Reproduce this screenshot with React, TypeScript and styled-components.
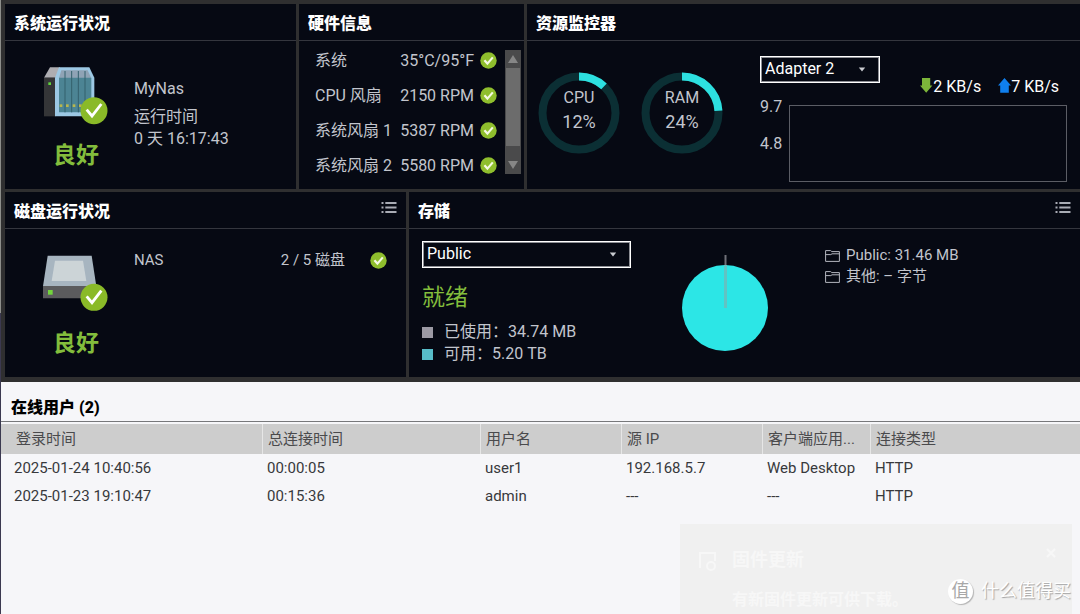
import React, { useState } from "react";
import styled, { createGlobalStyle } from "styled-components";

const GlobalStyle = createGlobalStyle`
  *, *::before, *::after { box-sizing: border-box; }
  body {
    margin: 0;
    background: #2f2f30;
    font-family: Roboto, "Noto Sans CJK SC", sans-serif;
    font-size: 16px;
    line-height: 22px;
    color: #c2c5cd;
  }
  button, select { font: inherit; }
  ul { margin: 0; padding: 0; list-style: none; }
`;

const Page = styled.div`
  position: relative;
  display: flex;
  flex-direction: column;
  min-height: 100vh;
  padding-left: 1px;
  overflow: hidden;
  background: linear-gradient(#8d8e8a 51%, #3b3950 51%);
`;

const Dashboard = styled.div`
  display: flex;
  flex-direction: column;
  gap: 3px;
  padding: 4px 0 5px 4px;
  background: #2f2f30;
`;

const PanelRow = styled.div<{ $columns: string }>`
  display: grid;
  grid-template-columns: ${(p) => p.$columns};
  gap: 3px;
`;

const PanelBox = styled.section`
  min-width: 0;
  min-height: 185px;
  background: #060913;
`;

const PanelHeader = styled.header`
  display: flex;
  align-items: flex-start;
  justify-content: space-between;
  height: 37px;
  padding: 9px 9px 0 9px;
  border-bottom: 1px solid #34363e;
`;

const PanelTitle = styled.h2`
  margin: 0;
  font-size: 16px;
  line-height: 22px;
  font-weight: 900;
  color: #ffffff;
`;

const IconButton = styled.button`
  display: flex;
  padding: 0;
  border: 0;
  background: none;
  color: #a9acb5;
  cursor: pointer;
`;

const StatusBody = styled.div`
  display: flex;
  gap: 24px;
  padding: 24px 19px 0 37px;
`;

const StatusColumn = styled.div`
  display: flex;
  flex: none;
  flex-direction: column;
  align-items: center;
  gap: 13px;
  width: 68px;
`;

const StatusText = styled.strong<{ $weight: number }>`
  font-size: 23px;
  line-height: 32px;
  font-weight: ${(p) => p.$weight};
  color: #83bd3c;
`;

const SystemInfo = styled.div`
  display: flex;
  flex-direction: column;
  padding-top: 13px;
`;

const HostName = styled.span`
  margin-bottom: 6px;
`;

const DiskInfo = styled.div`
  display: flex;
  flex: 1;
  align-items: center;
  height: 22px;
  margin-top: -4px;
  font-size: 15px;
`;

const DiskCount = styled.span`
  margin-left: auto;
  padding-right: 25px;
`;

const HardwareBody = styled.div`
  display: flex;
  gap: 8px;
  padding: 2px 3px 0 16px;
`;

const HardwareList = styled.ul`
  flex: 1;
`;

const HardwareRow = styled.li`
  display: grid;
  grid-template-columns: 1fr auto 17px;
  align-items: center;
  column-gap: 6px;
  height: 35px;
  white-space: nowrap;
`;

const ScrollTrack = styled.div`
  display: flex;
  flex-direction: column;
  width: 16px;
  height: 124px;
  margin-top: 7px;
  background: #4a4a4b;
`;

const ScrollButton = styled.button`
  display: flex;
  align-items: center;
  justify-content: center;
  height: 18px;
  padding: 0;
  border: 0;
  background: #4a4a4b;
`;

const ScrollThumb = styled.div`
  height: 78px;
  margin: 0 1px;
  background: #6c6c6c;
`;

const ScrollSpace = styled.div`
  flex: 1;
`;

const MonitorBody = styled.div`
  display: flex;
  padding: 15px 13px 0 11px;
`;

const Gauges = styled.div`
  display: flex;
  flex: none;
  gap: 21px;
  width: 222px;
  padding-top: 16px;
`;

const GaugeBox = styled.div`
  display: grid;
  width: 82px;
  height: 82px;
  > * { grid-area: 1 / 1; }
`;

const GaugeText = styled.div`
  display: flex;
  flex-direction: column;
  justify-content: center;
  align-items: center;
  padding-bottom: 6px;
  line-height: 24px;
`;

const GaugeValue = styled.span`
  font-size: 18px;
`;

const Network = styled.div`
  display: flex;
  flex: 1;
  flex-direction: column;
`;

const NetworkTop = styled.div`
  display: flex;
  align-items: flex-start;
  justify-content: space-between;
  height: 41px;
`;

const Rates = styled.div`
  display: flex;
  align-self: flex-end;
  gap: 17px;
  padding-right: 8px;
  line-height: 20px;
  color: #ffffff;
`;

const Rate = styled.span`
  display: flex;
  align-items: center;
`;

const ChartRow = styled.div`
  display: flex;
`;

const AxisLabels = styled.div`
  display: flex;
  flex: none;
  flex-direction: column;
  gap: 17px;
  width: 29px;
  line-height: 20px;
`;

const Plot = styled.div`
  flex: 1;
  height: 77px;
  margin-top: 8px;
  border: 1px solid #5b5d65;
`;

const SelectBox = styled.div<{ $width: number }>`
  display: grid;
  align-items: center;
  width: ${(p) => p.$width}px;
  height: 27px;
  border: 1px solid #ffffff;
  outline: 1px solid #8c8e94;
  outline-offset: -2px;
  > * { grid-area: 1 / 1; }
  svg {
    justify-self: end;
    margin-right: 13px;
    pointer-events: none;
  }
`;

const SelectInput = styled.select`
  width: 100%;
  height: 24px;
  padding: 0 24px 4px 4px;
  border: 0;
  outline: 0;
  appearance: none;
  background: none;
  color: #ffffff;
  option { color: #000000; }
`;

const StorageBody = styled.div`
  display: flex;
  padding: 12px 13px 0 13px;
`;

const StorageSummary = styled.div`
  display: flex;
  flex: none;
  flex-direction: column;
  align-items: flex-start;
  width: 259px;
`;

const Ready = styled.div`
  padding: 14px 0 7px;
  height: 53px;
`;

const Legend = styled.ul`
  display: flex;
  flex-direction: column;
`;

const LegendItem = styled.li`
  display: flex;
  align-items: center;
  gap: 11px;
`;

const Swatch = styled.span<{ $color: string }>`
  width: 11px;
  height: 11px;
  background: ${(p) => p.$color};
`;

const PieWrap = styled.div`
  flex: none;
  width: 144px;
  padding-top: 14px;
`;

const FolderList = styled.ul`
  padding-top: 4px;
  font-size: 15px;
  line-height: 21px;
`;

const FolderItem = styled.li`
  display: flex;
  align-items: center;
  gap: 6px;
`;

const Users = styled.section`
  flex: 1;
  background: #f6f6f9;
  color: #38393c;
`;

const UsersTitle = styled.h2`
  height: 39px;
  margin: 0;
  padding: 15px 10px 0;
  font-size: 16px;
  line-height: 22px;
  font-weight: 900;
  color: #000000;
`;

const UserTable = styled.table`
  width: 100%;
  table-layout: fixed;
  border-collapse: separate;
  border-spacing: 0;
  border-top: 1px solid #77787b;
  padding-top: 2px;
  font-size: 15px;
  line-height: 20px;
  text-align: left;
  white-space: nowrap;
`;

const HeadCell = styled.th<{ $width?: number }>`
  width: ${(p) => (p.$width ? `${p.$width}px` : "auto")};
  height: 30px;
  padding: 0 5px;
  border-left: 1px solid #e6e6e6;
  background: #cdcdcd;
  font-weight: 400;
  color: #4a4a4c;
  &:first-child { padding-left: 15px; border-left: 0; }
`;

const Cell = styled.td`
  height: 28px;
  padding: 0 5px 1px;
  &:first-child { padding-left: 13px; }
`;

const Toast = styled.aside`
  position: absolute;
  right: 8px;
  bottom: 0;
  display: grid;
  grid-template-columns: 22px 1fr 10px;
  column-gap: 14px;
  row-gap: 14px;
  width: 392px;
  height: 90px;
  padding: 24px 16px 0;
  overflow: hidden;
  background: #f0f0f0;
  color: #f7f7f7;
  font-weight: 700;
  line-height: 24px;
`;

const ToastTitle = styled.div`
  font-size: 18px;
`;

const ToastText = styled.div`
  grid-column: 2;
`;

const Watermark = styled.div`
  position: absolute;
  right: 9px;
  bottom: 10px;
  display: flex;
  align-items: center;
  gap: 8px;
  font-size: 18px;
  line-height: 26px;
  color: #ffffff;
  text-shadow: 1px 1px 1px #a2a2a2;
`;

const WatermarkLogo = styled.span`
  width: 25px;
  height: 25px;
  border-radius: 50%;
  background: #ffffff;
  box-shadow: 1px 1px 1px #b4b4b4;
  color: #a8a8a8;
  font-size: 18px;
  line-height: 24px;
  text-align: center;
  text-shadow: none;
`;

const CheckIcon = () => (
  <svg width="17" height="17" viewBox="0 0 17 17" aria-label="正常">
    <circle cx="8.5" cy="8.5" r="8.2" fill="#8fbe2d" />
    <path d="M4.4 8.3 7.4 11.6 12.8 5.4" fill="none" stroke="#f4f9e4" strokeWidth="2.2" />
  </svg>
);

const ListIcon = () => (
  <svg width="16" height="13" viewBox="0 0 16 13" fill="currentColor">
    {[1, 5.5, 10].map((y) => (
      <g key={y}>
        <rect x="0.5" y={y} width="2" height="2" />
        <rect x="4.3" y={y} width="11.2" height="2" />
      </g>
    ))}
  </svg>
);

const Badge = ({ cy }: { cy: number }) => (
  <g>
    <circle cx="282" cy={cy} r="40.5" fill="#8aba28" />
    <path
      d={`M260 ${cy - 3} 276 ${cy + 16} 304 ${cy - 20}`}
      fill="none"
      stroke="#fff"
      strokeWidth="8.5"
    />
  </g>
);

const NasIcon = () => (
  <svg width="68" height="62" viewBox="126 194 204 186">
    <path d="M132 232 150 201H180L168 232Z" fill="#aeaeb2" />
    <path d="M132 232H168V348H132Z" fill="#343537" />
    <rect x="145" y="246" width="8" height="8" fill="#5fd23c" />
    <path d="M165 232 177 201H268L283 232V348H165Z" fill="#9cc8e4" />
    <path d="M177 234 184 210H263L274 234Z" fill="#8fa3b5" />
    <path d="M177 232H274V336H177Z" fill="#4c8494" />
    {[195, 215, 235, 255].map((x) => (
      <path key={x} d={`M${x} 212V336`} stroke="#33606d" strokeWidth="3" />
    ))}
    {[183, 202, 222, 241].map((x) => (
      <rect key={x} x={x - 4} y="312" width="8" height="8" fill="#b9b74c" />
    ))}
    <Badge cy={331} />
  </svg>
);

const DiskIcon = () => (
  <svg width="68" height="62" viewBox="126 194 204 186">
    <path d="M143 202H275L289 294H129Z" fill="#a7b5c0" />
    <path d="M165 217H249L259 278H155Z" fill="#ccd4d7" />
    <path d="M129 293H289V330H129Z" fill="#5b5b5d" />
    <rect x="144" y="305" width="14" height="14" fill="#72d53c" />
    <Badge cy={327} />
  </svg>
);

const FolderIcon = () => (
  <svg width="15" height="14" viewBox="0 0 15 14" fill="none" stroke="#b4b7bf">
    <path d="M.6 12.4V1.6H5.6L6.8 2.6H14.4V12.4Z" />
    <path d="M.6 5.6H5.8L7 4.8H14.4" />
  </svg>
);

const CaretIcon = () => (
  <svg width="8" height="5" viewBox="0 0 8 5">
    <path d="M.8 .6H7.2L4 4.6Z" fill="#c9cbd0" />
  </svg>
);

const RateArrow = ({ up }: { up?: boolean }) => (
  <svg width="13" height="18" viewBox="0 0 13 18">
    {up ? (
      <path d="M6.5 0 13 7.4H10.8V14.8H2.2V7.4H0Z" fill="#0f7fee" />
    ) : (
      <path d="M2 0H10.2V7.4H12.4L6.2 14.8 0 7.4H2Z" fill="#7cb53a" />
    )}
  </svg>
);

const Gauge = ({ label, percent }: { label: string; percent: number }) => {
  const length = 2 * Math.PI * 36.5;
  return (
    <GaugeBox>
      <svg width="82" height="82" viewBox="0 0 82 82" fill="none" strokeWidth="8">
        <circle cx="41" cy="41" r="36.5" stroke="#0b2f34" />
        <circle
          cx="41"
          cy="41"
          r="36.5"
          stroke="#2de0e0"
          strokeDasharray={`${(length * percent) / 100} ${length * 2}`}
          transform="rotate(-90 41 41)"
        />
      </svg>
      <GaugeText>
        <span>{label}</span>
        <GaugeValue>{percent}%</GaugeValue>
      </GaugeText>
    </GaugeBox>
  );
};

const Dropdown = ({ label, width, options }: { label: string; width: number; options: string[] }) => {
  const [value, setValue] = useState(options[0]);
  return (
    <SelectBox $width={width}>
      <SelectInput aria-label={label} value={value} onChange={(e) => setValue(e.target.value)}>
        {options.map((o) => (
          <option key={o}>{o}</option>
        ))}
      </SelectInput>
      <CaretIcon />
    </SelectBox>
  );
};

const Panel = ({ title, menu, children }: { title: string; menu?: boolean; children: React.ReactNode }) => (
  <PanelBox>
    <PanelHeader>
      <PanelTitle>{title}</PanelTitle>
      {menu && (
        <IconButton type="button" aria-label={`${title}详情`}>
          <ListIcon />
        </IconButton>
      )}
    </PanelHeader>
    {children}
  </PanelBox>
);

const hardware = [
  ["系统", "35°C/95°F"],
  ["CPU 风扇", "2150 RPM"],
  ["系统风扇 1", "5387 RPM"],
  ["系统风扇 2", "5580 RPM"],
];

const columns: { title: string; width?: number }[] = [
  { title: "登录时间", width: 261 },
  { title: "总连接时间", width: 218 },
  { title: "用户名", width: 141 },
  { title: "源 IP", width: 141 },
  { title: "客户端应用...", width: 108 },
  { title: "连接类型" },
];

const sessions = [
  ["2025-01-24 10:40:56", "00:00:05", "user1", "192.168.5.7", "Web Desktop", "HTTP"],
  ["2025-01-23 19:10:47", "00:15:36", "admin", "---", "---", "HTTP"],
];

export default function App() {
  return (
    <>
      <GlobalStyle />
      <Page>
        <Dashboard>
          <PanelRow $columns="291fr 225fr 553fr">
            <Panel title="系统运行状况">
              <StatusBody>
                <StatusColumn>
                  <NasIcon />
                  <StatusText $weight={700}>良好</StatusText>
                </StatusColumn>
                <SystemInfo>
                  <HostName>MyNas</HostName>
                  <span>运行时间</span>
                  <span>0 天 16:17:43</span>
                </SystemInfo>
              </StatusBody>
            </Panel>
            <Panel title="硬件信息">
              <HardwareBody>
                <HardwareList>
                  {hardware.map(([name, value]) => (
                    <HardwareRow key={name}>
                      <span>{name}</span>
                      <span>{value}</span>
                      <CheckIcon />
                    </HardwareRow>
                  ))}
                </HardwareList>
                <ScrollTrack>
                  <ScrollButton type="button" aria-label="向上滚动">
                    <svg width="10" height="8" viewBox="0 0 10 8">
                      <path d="M5 0 10 8H0Z" fill="#868686" />
                    </svg>
                  </ScrollButton>
                  <ScrollThumb />
                  <ScrollSpace />
                  <ScrollButton type="button" aria-label="向下滚动">
                    <svg width="10" height="8" viewBox="0 0 10 8">
                      <path d="M5 8 10 0H0Z" fill="#868686" />
                    </svg>
                  </ScrollButton>
                </ScrollTrack>
              </HardwareBody>
            </Panel>
            <Panel title="资源监控器">
              <MonitorBody>
                <Gauges>
                  <Gauge label="CPU" percent={12} />
                  <Gauge label="RAM" percent={24} />
                </Gauges>
                <Network>
                  <NetworkTop>
                    <Dropdown label="网络适配器" width={120} options={["Adapter 2", "Adapter 1"]} />
                    <Rates>
                      <Rate>
                        <RateArrow />2 KB/s
                      </Rate>
                      <Rate>
                        <RateArrow up />7 KB/s
                      </Rate>
                    </Rates>
                  </NetworkTop>
                  <ChartRow>
                    <AxisLabels>
                      <span>9.7</span>
                      <span>4.8</span>
                    </AxisLabels>
                    <Plot />
                  </ChartRow>
                </Network>
              </MonitorBody>
            </Panel>
          </PanelRow>
          <PanelRow $columns="401fr 671fr">
            <Panel title="磁盘运行状况" menu>
              <StatusBody>
                <StatusColumn>
                  <DiskIcon />
                  <StatusText $weight={700}>良好</StatusText>
                </StatusColumn>
                <DiskInfo>
                  <span>NAS</span>
                  <DiskCount>2 / 5 磁盘</DiskCount>
                  <CheckIcon />
                </DiskInfo>
              </StatusBody>
            </Panel>
            <Panel title="存储" menu>
              <StorageBody>
                <StorageSummary>
                  <Dropdown label="共享文件夹" width={209} options={["Public"]} />
                  <Ready>
                    <StatusText $weight={400}>就绪</StatusText>
                  </Ready>
                  <Legend>
                    <LegendItem>
                      <Swatch $color="#9c9aa4" />
                      <span>已使用：34.74 MB</span>
                    </LegendItem>
                    <LegendItem>
                      <Swatch $color="#57bcc8" />
                      <span>可用：5.20 TB</span>
                    </LegendItem>
                  </Legend>
                </StorageSummary>
                <PieWrap>
                  <svg width="88" height="98" viewBox="0 0 88 98">
                    <circle cx="44" cy="53" r="43" fill="#2ce6e6" />
                    <path d="M44.5 0V10" stroke="#6f7078" strokeWidth="2" />
                    <path d="M44.5 10V53" stroke="#62c3c3" strokeWidth="3" />
                  </svg>
                </PieWrap>
                <FolderList>
                  <FolderItem>
                    <FolderIcon />
                    <span>Public: 31.46 MB</span>
                  </FolderItem>
                  <FolderItem>
                    <FolderIcon />
                    <span>其他: – 字节</span>
                  </FolderItem>
                </FolderList>
              </StorageBody>
            </Panel>
          </PanelRow>
        </Dashboard>
        <Users>
          <UsersTitle>在线用户 (2)</UsersTitle>
          <UserTable>
            <thead>
              <tr>
                {columns.map((c) => (
                  <HeadCell key={c.title} $width={c.width} scope="col">
                    {c.title}
                  </HeadCell>
                ))}
              </tr>
            </thead>
            <tbody>
              {sessions.map((row) => (
                <tr key={row[0]}>
                  {row.map((text, i) => (
                    <Cell key={i}>{text}</Cell>
                  ))}
                </tr>
              ))}
            </tbody>
          </UserTable>
        </Users>
        <Toast>
          <svg width="22" height="24" viewBox="0 0 22 24" fill="none" stroke="#f7f7f7" strokeWidth="2">
            <path d="M4 20V5H19V13" />
            <circle cx="15" cy="18" r="4" />
          </svg>
          <ToastTitle>固件更新</ToastTitle>
          <svg width="10" height="10" viewBox="0 0 10 10" stroke="#f7f7f7" strokeWidth="2">
            <path d="M1 1 9 9M9 1 1 9" />
          </svg>
          <ToastText>有新固件更新可供下载。</ToastText>
        </Toast>
        <Watermark>
          <WatermarkLogo>值</WatermarkLogo>
          <span>什么值得买</span>
        </Watermark>
      </Page>
    </>
  );
}
